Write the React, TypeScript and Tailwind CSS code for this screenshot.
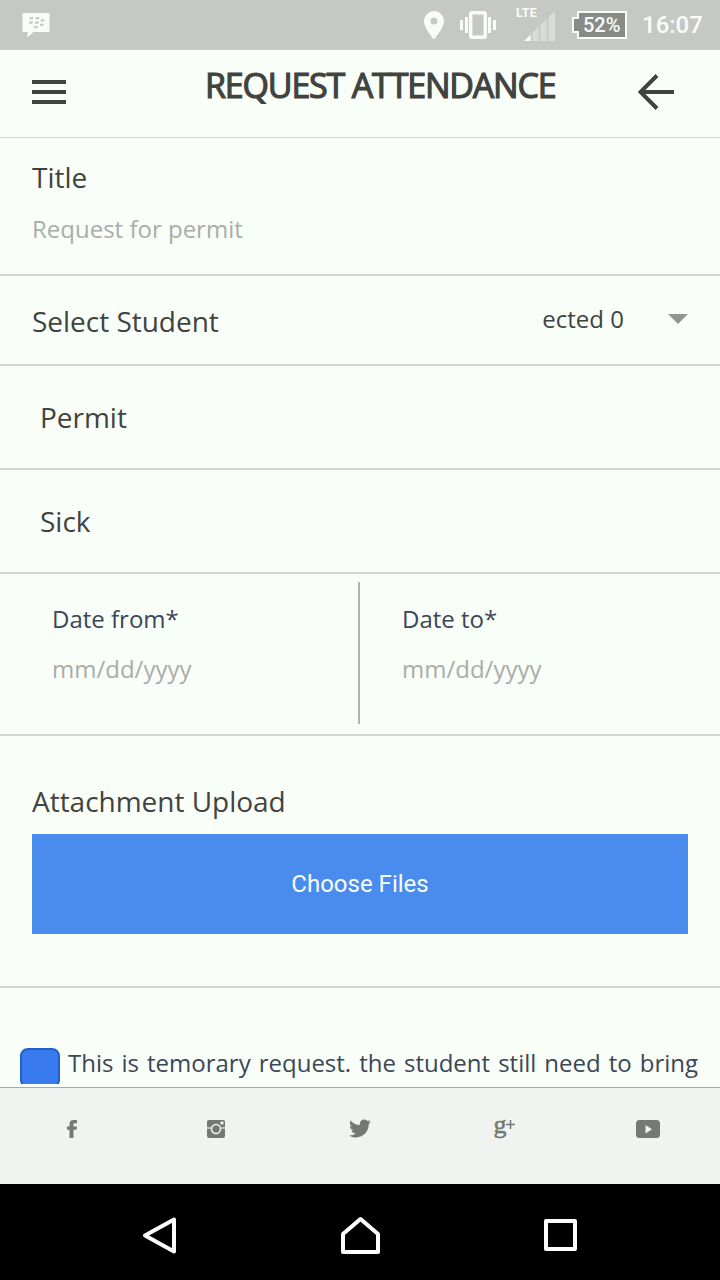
import React from "react";
import { FaTwitter } from "react-icons/fa";

function StatusBar() {
  return (
    <div className="flex h-[50px] shrink-0 items-start bg-[#c6c8c4] text-[#f8fdf7]">
      {/* BBM */}
      <svg className="mt-3 ml-[22px]" width="28" height="26" viewBox="0 0 28 26">
        <path d="M1.5 1h25q1 0 1 1v17q0 1-1 1H11.5l-6.5 5.500 1-5.500H1.500q-1 0-1-1V2q0-1 1-1z" fill="currentColor" />
        <g fill="#c6c8c4">
          <path d="M8 5h3.500l-.6 2.300H7.400zM14 5h3.500l-.6 2.300h-3.500zM7.500 9.400H11l-.6 2.300H6.900zM13.500 9.400H17l-.6 2.300h-3.500zM19 7.300h3.500l-.6 2.300h-3.500zM18.300 11.700h3.500l-.6 2.300h-3.500zM12.400 13.900h3.500l-.6 2.300h-3.500z" />
        </g>
      </svg>

      <svg className="mt-[11px] ml-[374px]" width="20" height="29" viewBox="0 0 20 29">
        <path
          d="M10 0A10 10 0 0 0 0 10c0 7.300 10 18.500 10 18.500S20 17.300 20 10A10 10 0 0 0 10 0zm0 13.500a3.500 3.500 0 1 1 0-7 3.500 3.500 0 0 1 0 7z"
          fill="currentColor"
        />
      </svg>

      <svg className="mt-[11px] ml-4" width="36" height="28" viewBox="0 0 36 28">
        <path d="M0 9h3v10H0zM5 6h3v16H5zM28 6h3v16h-3zM33 9h3v10h-3z" fill="currentColor" />
        <rect x="10.700" y="1.700" width="14.600" height="24.600" rx="1.500" fill="none" stroke="currentColor" strokeWidth="3.400" />
      </svg>

      {/* LTE + sinal */}
      <div className="mt-[6px] ml-5 flex w-[40px] flex-col">
        <span className="h-[12px] font-[Roboto] text-[12.500px] leading-[13px] font-bold tracking-[0.3px]">LTE</span>
        <svg className="-mt-[7px] ml-[8px]" width="32" height="30" viewBox="0 0 32 30">
          <path d="M0 30 31 0v30z" fill="#d9dcd7" />
          <path d="M0 30l7-6.500V30z" fill="currentColor" />
          <path d="M7.500 18v12M15.500 10v20M23.500 3v27" stroke="#c6c8c4" strokeWidth="1.800" />
        </svg>
      </div>

      <div className="relative mt-[11px] ml-4 h-7 w-[55px]">
        <svg className="absolute inset-0" width="55" height="28" viewBox="0 0 55 28">
          <path d="M6 1h48v26H6v-6H1V7h5z" fill="#898b87" stroke="currentColor" strokeWidth="2" />
        </svg>
        <span className="absolute top-0 left-[11px] font-[Roboto] text-[20px] leading-[28px] font-medium">52%</span>
      </div>

      <span className="ml-[15px] font-[Roboto] text-[24px] leading-[51px] font-medium">16:07</span>
    </div>
  );
}

function Header() {
  return (
    <header className="flex h-[88px] shrink-0 items-start border-b border-[#d2d7d1] text-[#41433f]">
      <div className="mt-[30px] ml-8 flex w-[34px] flex-col gap-[6.500px]">
        <div className="h-[3.500px] bg-[#41433f]" />
        <div className="h-[3.500px] bg-[#41433f]" />
        <div className="h-[3.500px] bg-[#41433f]" />
      </div>
      <h1 className="ml-[139px] w-[352px] text-[34px] leading-[46px] font-normal tracking-[-1.180px] whitespace-nowrap mt-[12px] [-webkit-text-stroke:1.200px_#41433f]">
        REQUEST ATTENDANCE
      </h1>
      <svg className="mt-6 ml-[81px]" width="36" height="36" viewBox="0 0 36 36" fill="none" stroke="currentColor" strokeWidth="4">
        <path d="M19 1.500 2.500 18 19 34.500M2.500 18H36" />
      </svg>
    </header>
  );
}

function DateField({ label }: { label: string }) {
  return (
    <div className="text-[24px]">
      <div className="leading-[50px] text-[#3c4656]">{label}</div>
      <div className="leading-[50px] text-[#a9ada8]">mm/dd/yyyy</div>
    </div>
  );
}

function Social() {
  return (
    <footer className="grid h-[97px] shrink-0 grid-cols-5 items-start justify-items-center border-t border-[#a5aaa3] bg-[#f0f4f0] pt-[31px] text-[#767874]">
      <svg className="mt-px" width="10" height="18" viewBox="0 0 10 18">
        <path d="M2.500 18V9.800H0V6.500h2.500V4.200Q2.500 0 6.700 0H10v3.200H7.800q-1.300 0-1.300 1.300v2H10l-.5 3.300h-3V18z" fill="currentColor" />
      </svg>
      <svg className="mt-px" width="18" height="18" viewBox="0 0 18 18">
        <rect width="18" height="18" rx="2" fill="currentColor" />
        <path d="M0 8h18" stroke="#f0f4f0" strokeWidth="1.200" />
        <circle cx="9" cy="9" r="4.500" fill="currentColor" stroke="#f0f4f0" strokeWidth="1.500" />
        <rect x="13.500" y="1.500" width="3" height="3" rx="0.800" fill="#f0f4f0" />
      </svg>
      <FaTwitter className="-mt-0.5 h-[23px] w-[22px]" />
      <div className="flex h-5 items-start">
        <span className="-mt-[4px] font-['Liberation_Serif'] text-[26px] leading-[20px] [-webkit-text-stroke:0.500px_#767874]">g</span>
        <svg className="-ml-px" width="9" height="10" viewBox="0 0 9 10" stroke="currentColor" strokeWidth="1.500">
          <path d="M0 5.500h9M4.500 1v9" />
        </svg>
      </div>
      <svg className="mt-px" width="24" height="18" viewBox="0 0 24 18">
        <rect width="24" height="18" rx="3.500" fill="currentColor" />
        <path d="M9.500 5v8.500l6.500-4.250z" fill="#f0f4f0" />
      </svg>
    </footer>
  );
}

function NavBar() {
  return (
    <nav className="flex h-24 shrink-0 items-start bg-black pt-[30px]">
      <svg className="ml-[140px]" width="40" height="40" viewBox="0 0 40 40" fill="none" stroke="#fff" strokeWidth="4" strokeLinejoin="round">
        <path d="M34 9v32L5 25z" transform="translate(0 -3.500)" />
      </svg>
      <svg className="ml-[160px]" width="40" height="40" viewBox="0 0 40 40" fill="none" stroke="#fff" strokeWidth="4" strokeLinejoin="round">
        <path d="M3 22 20.500 7 38 22v18H3z" transform="translate(0 -2)" />
      </svg>
      <svg className="ml-[160px]" width="40" height="40" viewBox="0 0 40 40" fill="none" stroke="#fff" strokeWidth="4" strokeLinejoin="round">
        <rect x="6" y="7" width="29" height="28" />
      </svg>
    </nav>
  );
}

export default function App() {
  return (
    <div className="flex h-[1280px] w-[720px] flex-col overflow-hidden bg-[#f9fef8] font-['Open_Sans',sans-serif] text-[#41433f]">
      <StatusBar />
      <Header />

      <main className="flex flex-1 flex-col overflow-hidden">
        <section className="h-[138px] shrink-0 border-b-2 border-[#d2d7d1] px-8 pt-[14px]">
          <div className="text-[28px] leading-[50px] tracking-[-0.020px]">Title</div>
          <div className="mt-px text-[24px] leading-[52px] text-[#a9ada8]">Request for permit</div>
        </section>

        <section className="flex h-[90px] shrink-0 items-start border-b-2 border-[#d2d7d1] px-8">
          <span className="flex-1 text-[28px] leading-[90px] tracking-[-0.020px]">Select Student</span>
          <span className="text-[24px] leading-[86px]">ected 0</span>
          <svg className="mt-[38px] ml-11" width="20" height="10" viewBox="0 0 20 10">
            <path d="M0 0h20L10 10z" fill="#929591" />
          </svg>
        </section>

        <section className="h-[104px] shrink-0 border-b-2 border-[#d2d7d1] px-10 text-[28px] leading-[103px] tracking-[-0.020px]">
          Permit
        </section>
        <section className="h-[104px] shrink-0 border-b-2 border-[#d2d7d1] px-10 text-[28px] leading-[103px] tracking-[-0.020px]">
          Sick
        </section>

        <section className="flex h-[162px] shrink-0 border-b-2 border-[#d2d7d1] py-2">
          <div className="w-[360px] border-r-2 border-[#b1b5b0] pt-3 pl-[52px] mb-0.5">
            <DateField label="Date from*" />
          </div>
          <div className="pt-3 pl-[42px]">
            <DateField label="Date to*" />
          </div>
        </section>

        <section className="h-[252px] shrink-0 border-b-2 border-[#d2d7d1] px-8 pt-10">
          <div className="text-[28px] leading-[50px] tracking-[-0.020px]">Attachment Upload</div>
          <button className="mt-2 block h-[100px] w-full bg-[#4a8cee] font-[Roboto] text-[24px] text-[#f8fdf7]">
            Choose Files
          </button>
        </section>

        <section className="mb-[3px] flex min-h-0 flex-1 items-start overflow-hidden pt-[60px] pl-5">
          <div className="h-10 w-10 shrink-0 rounded-lg border-2 border-[#1c62c8] bg-[#397bee]" />
          <p className="-mt-px ml-2 text-[24px] leading-[32px] whitespace-nowrap text-[#3c4656] [word-spacing:1.800px]">
            This is temorary request. the student still need to bring
          </p>
        </section>
      </main>

      <Social />
      <NavBar />
    </div>
  );
}
